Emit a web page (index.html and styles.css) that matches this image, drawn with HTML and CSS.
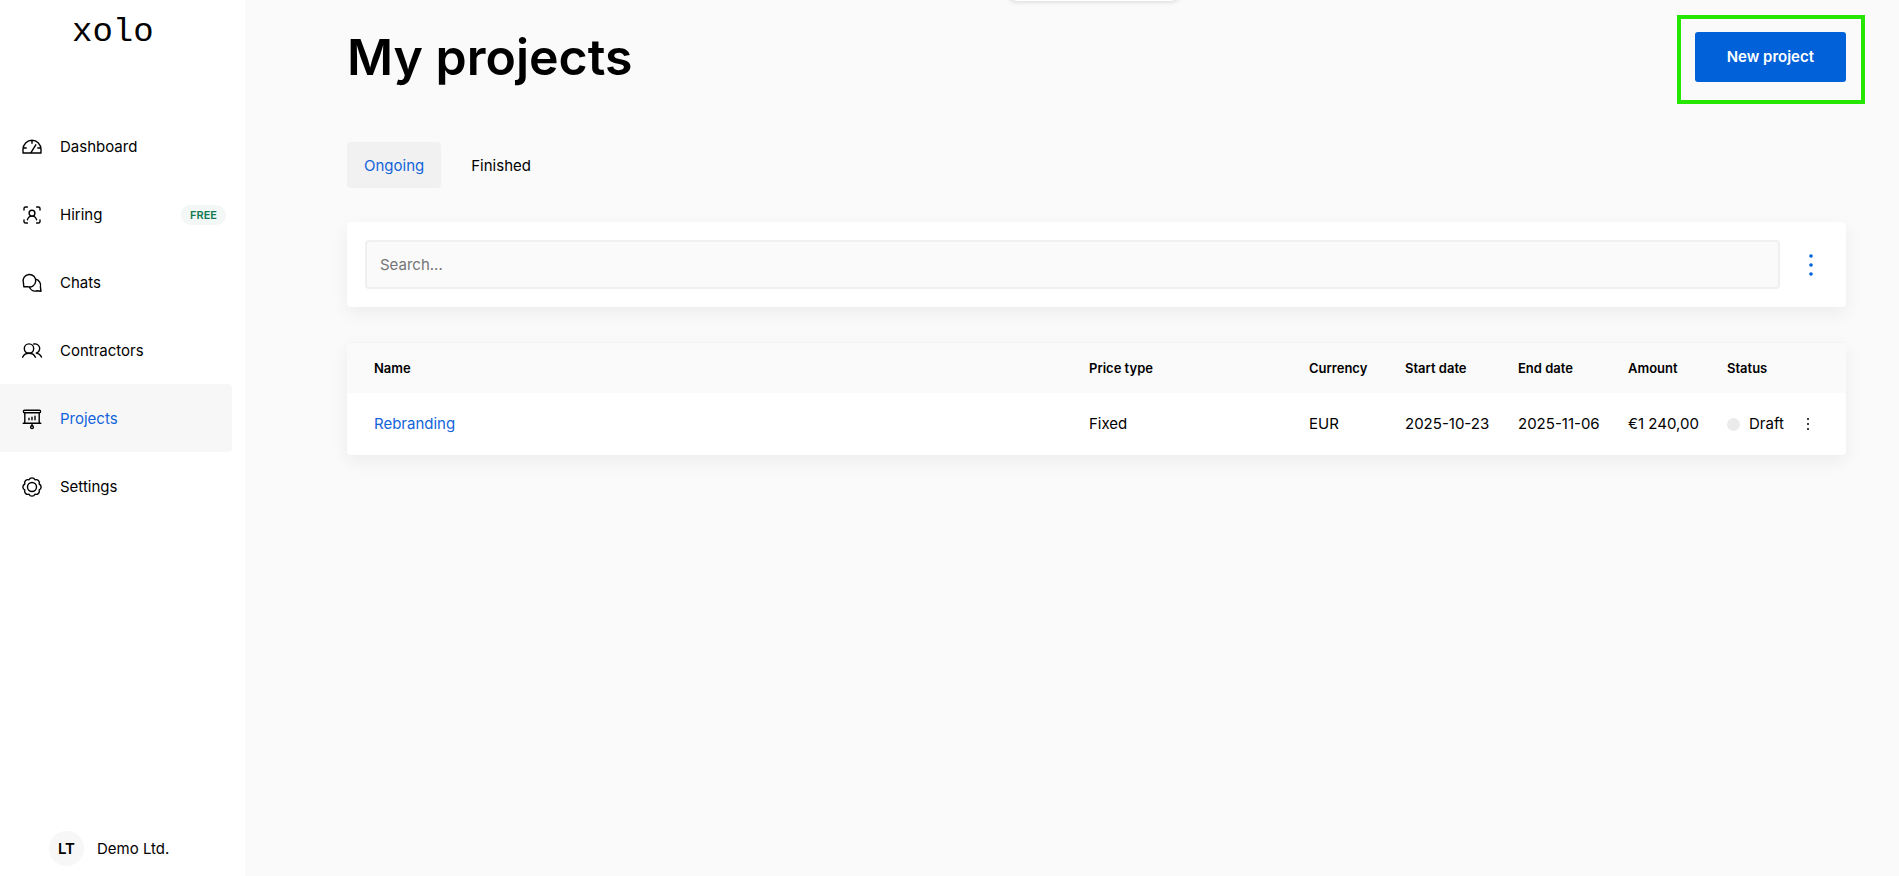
FILE: index.html
```
<!DOCTYPE html>
<html lang="en">
<head>
  <meta charset="UTF-8">
  <meta name="viewport" content="width=device-width, initial-scale=1.0">
  <title>My projects</title>
  <link rel="stylesheet" href="styles.css">
</head>
<body>

<div class="app">
  <aside class="sidebar">
    <a href="#" class="logo">xolo</a>
    <nav class="menu">
      <a href="#" class="menu-item">
        <svg class="icon" viewBox="0 0 20 20"><path d="M1 16v-3.700a9 9 0 0 1 18 0V16zM10 3.600v2.600M1.400 11h2.800M15.800 11h2.800M8.800 15.800l5-8"/></svg>
        <span>Dashboard</span>
      </a>
      <a href="#" class="menu-item">
        <svg class="icon" viewBox="0 0 20 20"><path d="M2 5V3.600Q2 2 3.600 2H5.400M14.600 2h1.800Q18 2 18 3.600V5M18 15v1.400Q18 18 16.400 18h-1.800M5.400 18H3.600Q2 18 2 16.400V15"/><circle cx="10" cy="8.200" r="2.900"/><path d="M5.400 14.800c.6-2.300 2.200-3.700 4.600-3.700s4 1.400 4.600 3.700"/></svg>
        <span>Hiring</span>
        <span class="badge">FREE</span>
      </a>
      <a href="#" class="menu-item">
        <svg class="icon" viewBox="0 0 20 20"><path d="M1.800 13.800l-.4-4.200a6.300 6.300 0 1 1 4 4.100z"/><path d="M13.700 6.300a6 6 0 0 1 4.700 7.500l.6 4.400-4.500-.4c-3 .9-6-.6-7.100-3.700"/></svg>
        <span>Chats</span>
      </a>
      <a href="#" class="menu-item">
        <svg class="icon" viewBox="0 0 20 20"><circle cx="7" cy="7.600" r="4.700"/><path d="M.6 16.200c1.200-2.600 3.400-3.900 6.400-3.900s5.200 1.300 6.400 3.900M11.800 3a4.700 4.700 0 1 1 2.400 9.100c2.500.3 4.200 1.700 5.300 3.900"/></svg>
        <span>Contractors</span>
      </a>
      <a href="#" class="menu-item active">
        <svg class="icon" viewBox="0 0 20 20"><rect x="1.500" y="1.200" width="17" height="2.600" rx="1"/><path d="M2.800 3.800v10.200M17.200 3.800v10.200M1.200 14.200h17.600M10 14.200v2.500M7 9.200v1.500M10 8.300v2.400M13 7.200v3.500"/><circle cx="10" cy="18.200" r="1.400"/></svg>
        <span>Projects</span>
      </a>
      <a href="#" class="menu-item">
        <svg class="icon" viewBox="0 0 20 20"><circle cx="10" cy="10" r="4.500"/><path d="M7 2.800A3.300 3.300 0 0 1 13 2.800A3.300 3.300 0 0 1 17.200 7A3.300 3.300 0 0 1 17.200 13A3.300 3.300 0 0 1 13 17.200A3.300 3.300 0 0 1 7 17.200A3.300 3.300 0 0 1 2.800 13A3.300 3.300 0 0 1 2.800 7A3.300 3.300 0 0 1 7 2.800z"/></svg>
        <span>Settings</span>
      </a>
    </nav>
    <div class="account">
      <span class="avatar">LT</span>
      <span>Demo Ltd.</span>
    </div>
  </aside>

  <main class="content">
    <div class="notch"></div>

    <header class="page-header">
      <h1>My projects</h1>
      <div class="new-project">
        <button type="button" class="btn-primary">New project</button>
      </div>
    </header>

    <div class="tabs">
      <button type="button" class="tab selected">Ongoing</button>
      <button type="button" class="tab">Finished</button>
    </div>

    <div class="card search-card">
      <input type="text" class="search" aria-label="Search" placeholder="Search...">
      <button type="button" class="btn-dots" aria-label="More filters">
        <svg width="6" height="24" viewBox="0 0 6 24"><circle cx="3" cy="3" r="1.800"/><circle cx="3" cy="12" r="1.800"/><circle cx="3" cy="21" r="1.800"/></svg>
      </button>
    </div>

    <div class="card table-card">
      <table class="projects">
        <colgroup>
          <col>
          <col class="col-price">
          <col class="col-currency">
          <col class="col-start">
          <col class="col-end">
          <col class="col-amount">
          <col class="col-status">
          <col class="col-actions">
        </colgroup>
        <thead>
          <tr>
            <th>Name</th>
            <th>Price type</th>
            <th>Currency</th>
            <th>Start date</th>
            <th>End date</th>
            <th>Amount</th>
            <th>Status</th>
            <th></th>
          </tr>
        </thead>
        <tbody>
          <tr>
            <td><a href="#">Rebranding</a></td>
            <td>Fixed</td>
            <td>EUR</td>
            <td>2025-10-23</td>
            <td>2025-11-06</td>
            <td>€1 240,00</td>
            <td><span class="status">Draft</span></td>
            <td>
              <button type="button" class="btn-row" aria-label="Project actions">
                <svg width="4" height="14" viewBox="0 0 4 14"><circle cx="2" cy="2" r="1"/><circle cx="2" cy="7" r="1"/><circle cx="2" cy="12" r="1"/></svg>
              </button>
            </td>
          </tr>
        </tbody>
      </table>
    </div>
  </main>
</div>

</body>
</html>
```

FILE: styles.css
```
* {
  box-sizing: border-box;
}
body {
  margin: 0;
  font-family: Inter, "Liberation Sans", sans-serif;
  font-size: 15px;
  line-height: 20px;
  color: #000;
  background: #fafafa;
}
a {
  color: #1264db;
  text-decoration: none;
}
button {
  font: inherit;
  color: inherit;
  border: none;
  background: none;
  cursor: pointer;
}
.app {
  display: flex;
  min-height: 100vh;
}

/* sidebar */
.sidebar {
  display: flex;
  flex-direction: column;
  flex: 0 0 245px;
  background: #fff;
}
.logo {
  height: 112px;
  padding: 15px 0 0 72px;
  font-family: "Liberation Mono", monospace;
  font-size: 34px;
  line-height: 34px;
  color: #000;
}
.menu-item {
  display: flex;
  align-items: center;
  height: 68px;
  margin-right: 13px;
  padding: 1px 6px 0 22px;
  color: #000;
}
.menu-item.active {
  background: #f7f7f7;
  border-radius: 0 4px 4px 0;
  color: #1264db;
}
.icon {
  width: 20px;
  height: 20px;
  margin-right: 18px;
  overflow: visible;
  fill: none;
  stroke: #000;
  stroke-width: 1.4;
  stroke-linecap: round;
  stroke-linejoin: round;
}
.badge {
  margin-left: auto;
  padding: 0 9px;
  border-radius: 10px;
  background: #f3f7f6;
  color: #147a54;
  font-size: 11px;
  font-weight: 600;
}
.account {
  display: flex;
  align-items: center;
  gap: 13px;
  margin-top: auto;
  padding: 0 0 10px 49px;
}
.avatar {
  width: 35px;
  height: 35px;
  border-radius: 50%;
  background: #f7f7f7;
  font-weight: 600;
  line-height: 35px;
  text-align: center;
}

/* page */
.content {
  position: relative;
  flex: 1;
  padding: 15px 53px 40px 102px;
}
.notch {
  position: absolute;
  top: -39px;
  left: 46%;
  width: 176px;
  height: 40px;
  border-radius: 12px;
  background: #fff;
  box-shadow: 0 1px 5px rgba(0, 0, 0, 0.14);
}
.page-header {
  display: flex;
  justify-content: space-between;
  align-items: flex-start;
  margin-right: -19px;
}
h1 {
  margin: 10px 0 0;
  font-size: 50px;
  font-weight: 600;
  line-height: 64px;
}
.new-project {
  padding: 13px 15px 18px 14px;
  border: 4px solid #25e600;
}
.btn-primary {
  display: block;
  height: 50px;
  padding: 0 32px;
  border-radius: 3px;
  background: #0061d9;
  color: #fff;
  font-weight: 600;
}
.tabs {
  display: flex;
  gap: 13px;
  margin-top: 38px;
}
.tab {
  height: 46px;
  padding: 1px 17px 0;
  border-radius: 4px;
}
.tab.selected {
  background: #f1f1f1;
  color: #1264db;
}
.card {
  border-radius: 4px;
  background: #fff;
  box-shadow: 0 6px 18px rgba(0, 0, 0, 0.06);
}
.search-card {
  display: flex;
  align-items: center;
  margin-top: 34px;
  padding: 18px;
}
.search {
  flex: 1;
  height: 49px;
  padding: 0 13px;
  border: 2px solid #f0f0f0;
  border-radius: 4px;
  background: #fafafa;
  font: inherit;
  color: #000;
}
.search::placeholder {
  color: #757575;
}
.btn-dots {
  display: flex;
  margin: 0 8px 0 22px;
  padding: 0 6px;
}
.btn-dots svg {
  fill: #0061d9;
}

/* projects table */
.table-card {
  margin-top: 35px;
  overflow: hidden;
}
.projects {
  width: 100%;
  border-collapse: collapse;
  table-layout: fixed;
}
.projects th,
.projects td {
  padding: 0 0 0 13px;
  text-align: left;
  white-space: nowrap;
}
.projects th {
  height: 51px;
  background: #fafafa;
  box-shadow: inset 0 1px #f3f3f3;
  font-size: 13px;
  font-weight: 600;
}
.projects td {
  height: 62px;
}
.projects th:first-child,
.projects td:first-child {
  padding-left: 27px;
}
.col-price {
  width: 220px;
}
.col-currency {
  width: 96px;
}
.col-start {
  width: 113px;
}
.col-end {
  width: 110px;
}
.col-amount {
  width: 99px;
}
.col-status {
  width: 75px;
}
.col-actions {
  width: 57px;
}
.status {
  display: flex;
  align-items: center;
  gap: 9px;
}
.status::before {
  content: "";
  width: 13px;
  height: 13px;
  border-radius: 50%;
  background: #ebebeb;
}
.btn-row {
  display: flex;
  padding: 4px;
}
```
